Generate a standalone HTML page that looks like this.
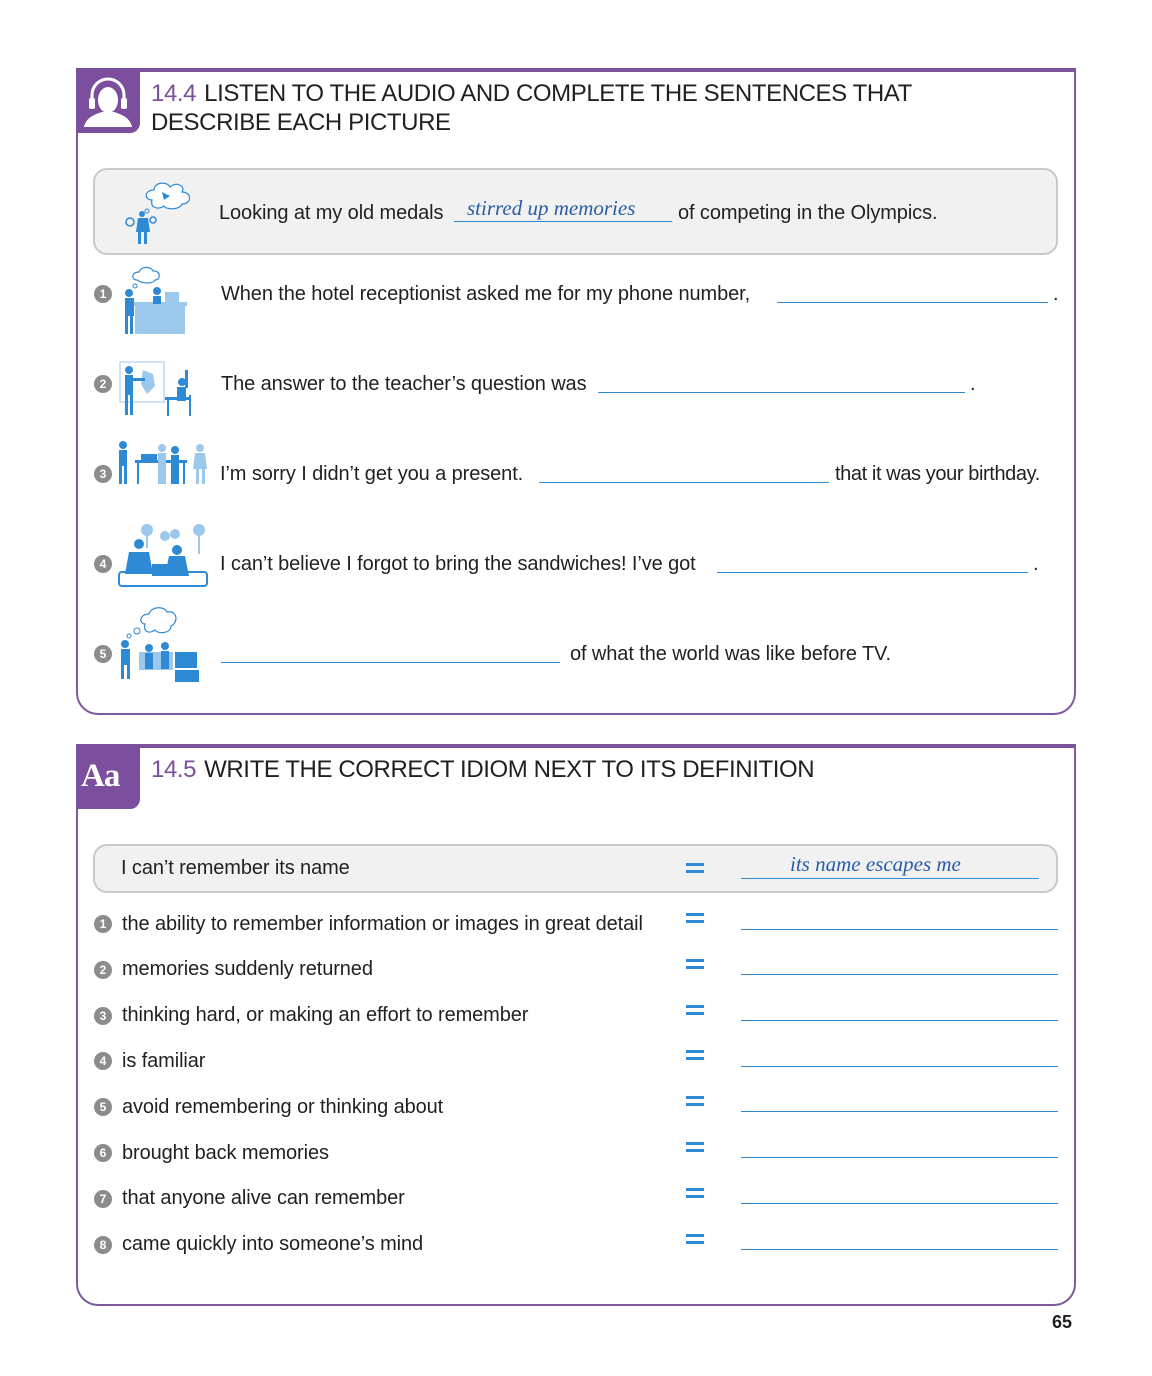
<!DOCTYPE html>
<html><head><meta charset="utf-8"><style>
*{margin:0;padding:0;box-sizing:border-box}
body{width:1152px;height:1376px;background:#fff;position:relative;font-family:"Liberation Sans",sans-serif;color:#231f20;overflow:hidden}
.frame{position:absolute;left:76px;width:1000px;border:2px solid #7d5a9e;border-top:4px solid #7b5399;border-radius:0 0 22px 22px}
.tab{position:absolute;left:76px;width:64px;height:64px;background:#7b4f9d;border-radius:0 0 10px 0}
.title{position:absolute;left:151px;font-size:24px;line-height:29px;letter-spacing:-0.4px}
.title b{color:#7b4f9d;font-weight:normal;margin-right:8px}
.box{position:absolute;left:93px;width:965px;background:#f1f1f2;border:2px solid #c9c9c9;border-radius:14px}
.t{position:absolute;font-size:20px;white-space:nowrap;line-height:22px;letter-spacing:-0.1px}
.ln{position:absolute;height:0;border-top:1.5px solid #2e8ad4}
.hw{position:absolute;font-family:"Liberation Serif",serif;font-style:italic;color:#2a5ca6;font-size:21px;white-space:nowrap}
.n{position:absolute;width:18px;height:18px;border-radius:50%;background:#8c8c8c;color:#fff;font-size:12px;font-weight:bold;text-align:center;line-height:18px}
.eq{position:absolute;left:686px;width:18px;height:10px;border-top:3px solid #2e8ad4;border-bottom:3px solid #2e8ad4}
svg{position:absolute}
</style></head><body>

<div class="frame" style="top:68px;height:647px"></div>
<div class="tab" style="top:69px">
<svg width="64" height="64" viewBox="0 0 64 64"><path d="M16 34 V26 A16 16 0 0 1 48 26 V34" fill="none" stroke="#fff" stroke-width="3"/><rect x="13" y="29" width="6" height="11" rx="2" fill="#fff"/><rect x="45" y="29" width="6" height="11" rx="2" fill="#fff"/><ellipse cx="32" cy="31" rx="10" ry="13" fill="#fff"/><path d="M8 58 C10 48 20 45 26 43 L38 43 C44 45 54 48 56 58 Z" fill="#fff"/></svg>
</div>
<div class="title" style="top:79px"><b>14.4</b>LISTEN TO THE AUDIO AND COMPLETE THE SENTENCES THAT<br>DESCRIBE EACH PICTURE</div>

<div class="box" style="top:168px;height:87px"></div>
<svg style="left:122px;top:178px" width="75" height="70" viewBox="0 0 75 70"><path d="M30 22 C22 22 22 12 32 12 C32 4 45 3 48 9 C54 3 64 8 60 14 C70 14 70 26 60 26 C58 32 44 32 42 28 C36 32 28 30 30 22Z" fill="#fff" stroke="#2e8ad4" stroke-width="1.2"/><path d="M40 14 l8 4 l-6 4z" fill="#2e8ad4"/><circle cx="25" cy="33" r="2" fill="none" stroke="#2e8ad4"/><circle cx="20" cy="36" r="3" fill="#2e8ad4"/><path d="M16 40 h10 l2 14 h-14z" fill="#2e8ad4"/><rect x="16" y="54" width="3" height="12" fill="#2e8ad4"/><rect x="22" y="54" width="3" height="12" fill="#2e8ad4"/><circle cx="8" cy="44" r="4" fill="none" stroke="#2e8ad4" stroke-width="1.5"/><circle cx="31" cy="42" r="3" fill="none" stroke="#2e8ad4" stroke-width="1.5"/></svg>
<div class="t" style="left:219px;top:202px">Looking at my old medals</div>
<div class="ln" style="left:454px;top:221px;width:218px"></div>
<div class="hw" style="left:467px;top:196px">stirred up memories</div>
<div class="t" style="left:678px;top:202px">of competing in the Olympics.</div>

<div class="n" style="left:94px;top:285px">1</div>
<svg style="left:115px;top:266px" width="75" height="70" viewBox="0 0 75 70"><path d="M22 14 C16 14 16 6 24 6 C26 0 36 0 38 5 C46 4 46 14 40 14 C38 18 28 18 22 14Z" fill="#fff" stroke="#2e8ad4" stroke-width="1.2"/><circle cx="20" cy="20" r="2" fill="none" stroke="#2e8ad4"/><rect x="20" y="38" width="50" height="30" fill="#9cc8ec"/><rect x="18" y="36" width="54" height="4" fill="#9cc8ec"/><circle cx="14" cy="27" r="4" fill="#2e8ad4"/><rect x="10" y="32" width="9" height="18" fill="#2e8ad4"/><rect x="10" y="50" width="3" height="18" fill="#2e8ad4"/><rect x="15" y="50" width="3" height="18" fill="#2e8ad4"/><circle cx="42" cy="25" r="4" fill="#2e8ad4"/><rect x="38" y="30" width="8" height="8" fill="#2e8ad4"/><rect x="50" y="26" width="14" height="10" fill="#9cc8ec"/></svg>
<div class="t" style="left:221px;top:283px">When the hotel receptionist asked me for my phone number,</div>
<div class="ln" style="left:777px;top:302px;width:271px"></div>
<div class="t" style="left:1053px;top:283px">.</div>

<div class="n" style="left:94px;top:375px">2</div>
<svg style="left:117px;top:360px" width="80" height="58" viewBox="0 0 80 58"><rect x="3" y="2" width="44" height="40" fill="#fff" stroke="#9cc8ec" stroke-width="1"/><path d="M26 10 l10 4 l2 12 l-8 8 l-6 -10z" fill="#9cc8ec"/><circle cx="12" cy="10" r="4" fill="#2e8ad4"/><rect x="8" y="15" width="8" height="20" fill="#2e8ad4"/><rect x="8" y="35" width="3" height="20" fill="#2e8ad4"/><rect x="13" y="35" width="3" height="20" fill="#2e8ad4"/><rect x="16" y="18" width="12" height="3" fill="#2e8ad4"/><circle cx="65" cy="22" r="4" fill="#2e8ad4"/><rect x="60" y="27" width="9" height="14" fill="#2e8ad4"/><rect x="68" y="10" width="3" height="18" fill="#2e8ad4"/><rect x="48" y="37" width="24" height="3" fill="#2e8ad4"/><rect x="50" y="40" width="2" height="16" fill="#2e8ad4"/><rect x="72" y="35" width="2" height="21" fill="#2e8ad4"/></svg>
<div class="t" style="left:221px;top:373px">The answer to the teacher’s question was</div>
<div class="ln" style="left:598px;top:392px;width:367px"></div>
<div class="t" style="left:970px;top:373px">.</div>

<div class="n" style="left:94px;top:465px">3</div>
<svg style="left:117px;top:440px" width="95" height="45" viewBox="0 0 95 45"><circle cx="6" cy="5" r="4" fill="#2e8ad4"/><rect x="2" y="10" width="8" height="16" fill="#2e8ad4"/><rect x="2" y="26" width="3" height="18" fill="#2e8ad4"/><rect x="7" y="26" width="3" height="18" fill="#2e8ad4"/><rect x="18" y="20" width="52" height="3" fill="#2e8ad4"/><rect x="20" y="23" width="2" height="21" fill="#2e8ad4"/><rect x="66" y="23" width="2" height="21" fill="#2e8ad4"/><rect x="24" y="14" width="16" height="6" fill="#2e8ad4"/><circle cx="45" cy="8" r="4" fill="#9cc8ec"/><rect x="41" y="13" width="8" height="31" fill="#9cc8ec"/><circle cx="58" cy="10" r="4" fill="#2e8ad4"/><rect x="54" y="15" width="8" height="29" fill="#2e8ad4"/><circle cx="83" cy="8" r="4" fill="#9cc8ec"/><path d="M78 13 h10 l2 16 h-14z" fill="#9cc8ec"/><rect x="79" y="29" width="3" height="15" fill="#9cc8ec"/><rect x="85" y="29" width="3" height="15" fill="#9cc8ec"/></svg>
<div class="t" style="left:220px;top:463px">I’m sorry I didn’t get you a present.</div>
<div class="ln" style="left:539px;top:482px;width:290px"></div>
<div class="t" style="left:835px;top:463px;letter-spacing:-0.4px">that it was your birthday.</div>

<div class="n" style="left:94px;top:555px">4</div>
<svg style="left:117px;top:522px" width="92" height="68" viewBox="0 0 92 68"><circle cx="30" cy="8" r="6" fill="#9cc8ec"/><circle cx="48" cy="14" r="5" fill="#9cc8ec"/><circle cx="58" cy="12" r="5" fill="#9cc8ec"/><circle cx="82" cy="8" r="6" fill="#9cc8ec"/><rect x="29" y="12" width="2" height="14" fill="#9cc8ec"/><rect x="81" y="12" width="2" height="20" fill="#9cc8ec"/><rect x="2" y="50" width="88" height="14" rx="3" fill="#fff" stroke="#2e8ad4" stroke-width="2"/><circle cx="22" cy="22" r="5" fill="#2e8ad4"/><path d="M12 30 h20 l4 22 h-28z" fill="#2e8ad4"/><circle cx="60" cy="28" r="5" fill="#2e8ad4"/><path d="M52 34 h16 l4 20 h-24z" fill="#2e8ad4"/><rect x="35" y="42" width="18" height="12" fill="#2e8ad4"/></svg>
<div class="t" style="left:220px;top:553px">I can’t believe I forgot to bring the sandwiches! I’ve got</div>
<div class="ln" style="left:717px;top:572px;width:311px"></div>
<div class="t" style="left:1033px;top:553px">.</div>

<div class="n" style="left:94px;top:645px">5</div>
<svg style="left:117px;top:606px" width="85" height="78" viewBox="0 0 85 78"><path d="M28 18 C22 18 22 8 32 8 C34 0 48 0 50 6 C60 4 62 16 54 20 C54 28 40 28 38 24 C32 28 26 26 28 18Z" fill="#fff" stroke="#2e8ad4" stroke-width="1.2"/><circle cx="20" cy="25" r="3" fill="none" stroke="#2e8ad4"/><circle cx="12" cy="30" r="2" fill="none" stroke="#2e8ad4"/><circle cx="8" cy="38" r="4" fill="#2e8ad4"/><rect x="4" y="43" width="9" height="16" fill="#2e8ad4"/><rect x="4" y="59" width="3" height="14" fill="#2e8ad4"/><rect x="10" y="59" width="3" height="14" fill="#2e8ad4"/><rect x="22" y="46" width="34" height="18" fill="#9cc8ec"/><circle cx="32" cy="42" r="4" fill="#2e8ad4"/><rect x="28" y="47" width="8" height="16" fill="#2e8ad4"/><circle cx="48" cy="40" r="4" fill="#2e8ad4"/><rect x="44" y="45" width="8" height="18" fill="#2e8ad4"/><rect x="58" y="46" width="22" height="16" fill="#2e8ad4"/><rect x="58" y="64" width="24" height="12" fill="#2e8ad4"/></svg>
<div class="ln" style="left:221px;top:662px;width:339px"></div>
<div class="t" style="left:570px;top:643px">of what the world was like before TV.</div>

<div class="frame" style="top:744px;height:562px"></div>
<div class="tab" style="top:745px"><div style="position:absolute;left:5px;top:13px;color:#fff;font-family:'Liberation Serif',serif;font-weight:bold;font-size:33px;letter-spacing:-1px">Aa</div></div>
<div class="title" style="top:755px"><b>14.5</b>WRITE THE CORRECT IDIOM NEXT TO ITS DEFINITION</div>

<div class="box" style="top:844px;height:49px"></div>
<div class="t" style="left:121px;top:857px">I can’t remember its name</div>
<div class="eq" style="top:863px"></div>
<div class="ln" style="left:741px;top:878px;width:298px"></div>
<div class="hw" style="left:790px;top:852px">its name escapes me</div>

<div class="n" style="left:94px;top:915px">1</div><div class="t" style="left:122px;top:913px">the ability to remember information or images in great detail</div><div class="eq" style="top:913px"></div><div class="ln" style="left:741px;top:929px;width:317px"></div>
<div class="n" style="left:94px;top:961px">2</div><div class="t" style="left:122px;top:958px">memories suddenly returned</div><div class="eq" style="top:959px"></div><div class="ln" style="left:741px;top:974px;width:317px"></div>
<div class="n" style="left:94px;top:1007px">3</div><div class="t" style="left:122px;top:1004px">thinking hard, or making an effort to remember</div><div class="eq" style="top:1005px"></div><div class="ln" style="left:741px;top:1020px;width:317px"></div>
<div class="n" style="left:94px;top:1052px">4</div><div class="t" style="left:122px;top:1050px">is familiar</div><div class="eq" style="top:1050px"></div><div class="ln" style="left:741px;top:1066px;width:317px"></div>
<div class="n" style="left:94px;top:1098px">5</div><div class="t" style="left:122px;top:1096px">avoid remembering or thinking about</div><div class="eq" style="top:1096px"></div><div class="ln" style="left:741px;top:1111px;width:317px"></div>
<div class="n" style="left:94px;top:1144px">6</div><div class="t" style="left:122px;top:1142px">brought back memories</div><div class="eq" style="top:1142px"></div><div class="ln" style="left:741px;top:1157px;width:317px"></div>
<div class="n" style="left:94px;top:1190px">7</div><div class="t" style="left:122px;top:1187px">that anyone alive can remember</div><div class="eq" style="top:1188px"></div><div class="ln" style="left:741px;top:1203px;width:317px"></div>
<div class="n" style="left:94px;top:1236px">8</div><div class="t" style="left:122px;top:1233px">came quickly into someone’s mind</div><div class="eq" style="top:1234px"></div><div class="ln" style="left:741px;top:1249px;width:317px"></div>

<div style="position:absolute;left:1052px;top:1312px;font-size:18px;font-weight:bold;color:#231f20">65</div>
</body></html>
